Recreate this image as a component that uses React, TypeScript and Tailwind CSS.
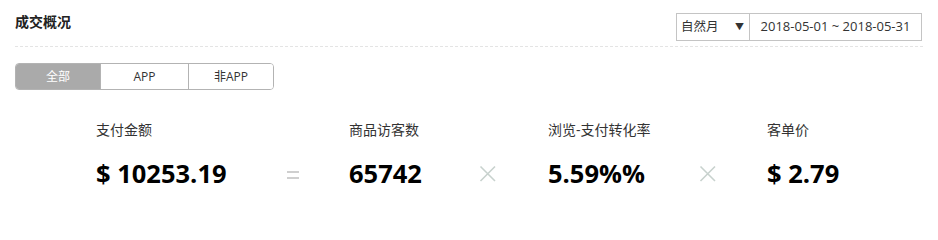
import { useState } from "react";

const font = { fontFamily: '"Microsoft YaHei", "Open Sans", "Noto Sans CJK SC", sans-serif' };

const tabs = ["全部", "APP", "非APP"];

function Metric({ label, value, className }: { label: string; value: string; className: string }) {
  return (
    <div className={className}>
      <div className="text-[14px] leading-[20px] text-[#333]">{label}</div>
      <div className="mt-[17px] text-[25.5px] font-bold leading-[32px] text-black">{value}</div>
    </div>
  );
}

function Equals() {
  return (
    <div className="flex w-[40px] justify-center pt-[39px]">
      <svg width="14" height="32" viewBox="0 0 14 32" aria-hidden="true">
        <rect x="1" y="12" width="12" height="2" fill="#cfcfcf" />
        <rect x="1" y="18" width="12" height="2" fill="#cfcfcf" />
      </svg>
    </div>
  );
}

function Times() {
  return (
    <div className="flex w-[40px] justify-center pt-[39px]">
      <svg width="18" height="32" viewBox="0 0 18 32" aria-hidden="true">
        <path d="M1.5 7.5 L16 22 M16 7.5 L1.5 22" stroke="#c8d2ce" strokeWidth="1.6" fill="none" />
      </svg>
    </div>
  );
}

export default function App() {
  const [active, setActive] = useState(0);
  return (
    <div className="h-[233px] w-[938px] bg-white px-[15px]" style={font}>
      <div className="flex h-[47px] items-start justify-between border-b border-dashed border-[#e4e4e4]">
        <h2 className="pt-[12px] text-[14px] font-bold leading-[20px] text-[#222]">成交概况</h2>
        <div className="mr-[1px] mt-[13px] flex h-[28px] border border-[#c4c4c4] text-[13px] text-[#333]">
          <div className="flex w-[73px] items-center justify-between border-r border-[#c4c4c4] pl-[4px] pr-[5px]">
            <span className="text-[12.5px]">自然月</span>
            <span className="text-[9px]">▼</span>
          </div>
          <div className="flex w-[171px] items-center justify-center">2018-05-01 ~ 2018-05-31</div>
        </div>
      </div>

      <div className="mt-[16px] flex h-[27px] w-[259px] overflow-hidden rounded-[4px] border border-[#b3b3b3] text-[12px]">
        {tabs.map((t, i) => (
          <button
            key={t}
            onClick={() => setActive(i)}
            className={`flex items-center justify-center ${i === 0 ? "w-[84px]" : i === 1 ? "w-[88px]" : "flex-1"} ${
              i > 0 ? "border-l border-[#b3b3b3]" : ""
            } ${active === i ? "bg-[#aaaaaa] text-white" : "bg-white text-[#333]"}`}
          >
            {t}
          </button>
        ))}
      </div>

      <div className="mt-[30px] flex pl-[81px]">
        <Metric className="w-[177px]" label="支付金额" value="$ 10253.19" />
        <Equals />
        <Metric className="w-[155px] pl-[36px]" label="商品访客数" value="65742" />
        <Times />
        <Metric className="w-[180px] pl-[40px]" label="浏览-支付转化率" value="5.59%%" />
        <Times />
        <Metric className="pl-[39px]" label="客单价" value="$ 2.79" />
      </div>
    </div>
  );
}
